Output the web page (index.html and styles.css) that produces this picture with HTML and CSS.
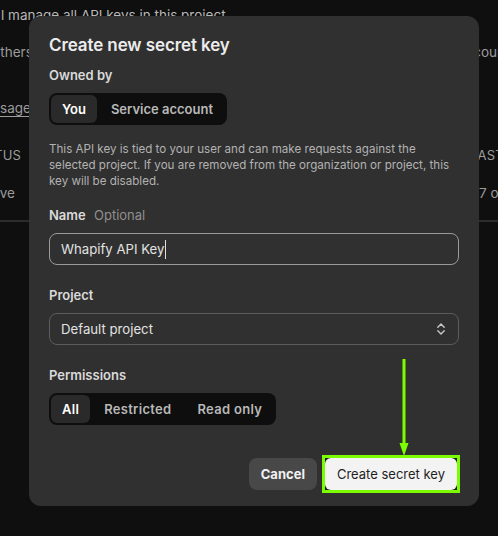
FILE: index.html
```html
<!DOCTYPE html>
<html lang="en">
<head>
<meta charset="utf-8">
<title>Create new secret key</title>
<link rel="stylesheet" href="styles.css">
</head>
<body>
<div class="page">
  <div class="bg-row row1"><span class="bg-left">l manage all API keys in this project.</span></div>
  <div class="bg-row row2"><span class="bg-left off-others">Others</span><span class="bg-right r-account">account</span></div>
  <div class="bg-row row3"><span class="bg-left off-usage link">Usage</span></div>
  <div class="bg-row row4"><span class="bg-left off-status caps">STATUS</span><span class="bg-right caps r-last">LAST USED</span></div>
  <div class="bg-row row5"><span class="bg-left off-active">Active</span><span class="bg-right r-date">7 oct 2024</span></div>
  <div class="bg-divider"></div>
</div>

<div class="modal" role="dialog">
  <h2 class="title">Create new secret key</h2>
  <div class="label">Owned by</div>
  <div class="seg">
    <span class="opt active">You</span>
    <span class="opt">Service account</span>
  </div>
  <p class="desc">This API key is tied to your user and can make requests against the selected project. If you are removed from the organization or project, this key will be disabled.</p>
  <div class="label">Name <span class="optional">Optional</span></div>
  <div class="field focused"><span class="value">Whapify API Key</span><span class="caret"></span></div>
  <div class="label">Project</div>
  <div class="field select">
    <span class="value">Default project</span>
    <svg class="chev" width="10" height="14" viewBox="0 0 10 14"><path d="M1.8 5.2 L5 2 L8.2 5.2 M1.8 8.8 L5 12 L8.2 8.8" fill="none" stroke="#c8c8c8" stroke-width="1.4" stroke-linecap="round" stroke-linejoin="round"/></svg>
  </div>
  <div class="label">Permissions</div>
  <div class="seg seg-perm">
    <span class="opt active">All</span>
    <span class="opt">Restricted</span>
    <span class="opt">Read only</span>
  </div>
  <div class="actions">
    <button class="btn cancel">Cancel</button>
    <span class="highlight"><button class="btn primary">Create secret key</button></span>
  </div>
  <svg class="arrow" width="12" height="100" viewBox="0 0 12 100"><line x1="6" y1="0" x2="6" y2="88" stroke="#7cfc00" stroke-width="3"/><polygon points="1.5,84 10.5,84 6,97" fill="#7cfc00"/></svg>
</div>
</body>
</html>
```
FILE: styles.css
```css
* { box-sizing: border-box; }
html, body {
  margin: 0;
  padding: 0;
  background: #0f0f0f;
  font-family: Inter, "Noto Sans", "Liberation Sans", sans-serif;
}
.page {
  width: 498px;
  height: 536px;
  overflow: hidden;
  padding-top: 6px;
  color: #9c9c9c;
  font-size: 13.5px;
}
.bg-row {
  display: flex;
  justify-content: space-between;
  line-height: 18px;
  height: 18px;
  white-space: nowrap;
}
.row1 { color: #b8b8b8; }
.row1 .bg-left { margin-left: 1px; }
.row2 { margin-top: 19px; }
.row3 { margin-top: 38px; }
.row4 { margin-top: 29px; }
.row5 { margin-top: 20px; }
.bg-right { width: 80px; }
.r-account { margin-right: -40px; }
.r-last { margin-right: -52px; }
.r-date { margin-right: -61px; }
.off-others { margin-left: -10px; }
.off-usage { margin-left: -10px; }
.off-status { margin-left: -30px; }
.off-active { margin-left: -25px; }
.caps { font-size: 13px; letter-spacing: 0.2px; }
.link { text-decoration: underline; text-underline-offset: 3px; }
.bg-divider {
  margin-top: 18px;
  height: 2px;
  background: #2c2c2c;
}

.modal {
  position: fixed;
  left: 29px;
  top: 16px;
  width: 450px;
  height: 490px;
  background: #303030;
  border-radius: 12px;
  padding: 17px 20px 13px 20px;
  color: #e6e6e6;
}
.title {
  margin: 0;
  font-size: 17px;
  line-height: 24px;
  font-weight: 600;
  color: #ececec;
  letter-spacing: -0.1px;
}
.label {
  margin-top: 9px;
  font-size: 13px;
  line-height: 18px;
  font-weight: 600;
  color: #dadada;
}
.optional {
  font-weight: 400;
  color: #8f8f8f;
  margin-left: 5px;
}
.seg {
  margin-top: 9px;
  display: inline-flex;
  gap: 2px;
  padding: 2px;
  height: 32px;
  background: #0e0e0e;
  border-radius: 8px;
}
.opt {
  display: flex;
  align-items: center;
  padding: 0 12px;
  height: 28px;
  border-radius: 6px;
  font-size: 13px;
  font-weight: 600;
  color: #b8b8b8;
}
.opt.active {
  background: #2a2a2a;
  color: #ffffff;
  padding: 0 11px;
}
.seg-perm .opt { letter-spacing: 0.3px; }
.seg-perm .opt.active { padding: 0 11px; }
.desc {
  margin: 16px 0 0 0;
  font-size: 11.6px;
  line-height: 16px;
  color: #b2b2b2;
}
.desc + .label { margin-top: 17px; }
.field {
  margin-top: 9px;
  height: 32px;
  border: 1px solid #9a9a9a;
  border-radius: 8px;
  display: flex;
  align-items: center;
  padding: 0 11px;
  font-size: 13.2px;
  color: #e2e2e2;
}
.field + .label { margin-top: 21px; }
.caret {
  width: 1px;
  height: 19px;
  background: #e0e0e0;
  margin-left: 1px;
}
.select {
  border-color: #5c5c5c;
  justify-content: space-between;
}
.chev { margin-right: 1px; }
.actions {
  margin-top: 30px;
  display: flex;
  justify-content: flex-end;
  align-items: center;
  gap: 5px;
  margin-right: -1px;
}
.btn {
  font-family: inherit;
  height: 32px;
  border: none;
  border-radius: 8px;
  padding: 0 12px;
  font-size: 13px;
  cursor: pointer;
}
.cancel {
  background: #484848;
  color: #f2f2f2;
  font-weight: 700;
}
.highlight {
  display: flex;
  border: 3px solid #7cfc00;
  background: #1c1c1c;
}
.primary {
  background: #f3f3f3;
  color: #1f1f1f;
  font-weight: 400;
  border-radius: 6px;
}
.arrow {
  position: absolute;
  left: 369px;
  top: 343px;
}
```
